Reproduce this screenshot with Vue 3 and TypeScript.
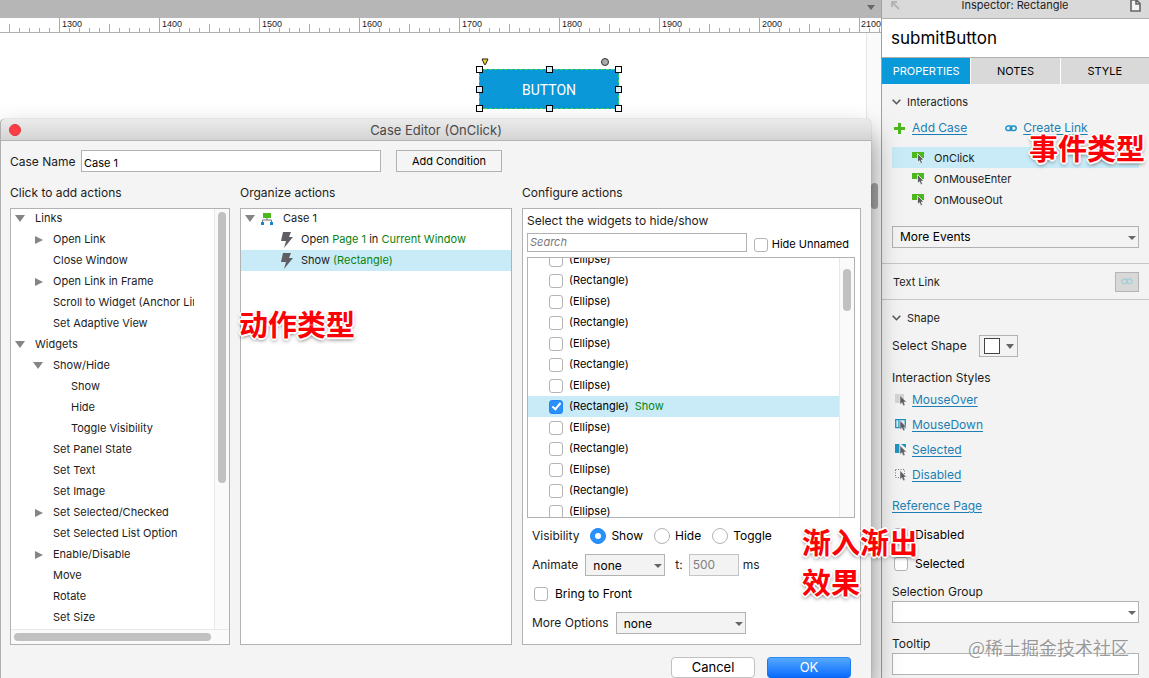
<script setup lang="ts">
import { ref } from 'vue'

interface TreeItem {
  label: string
  level: number
  state?: 'open' | 'closed'
}

interface WidgetItem {
  label: string
  checked: boolean
}

const rulerMarks = [1300, 1400, 1500, 1600, 1700, 1800, 1900, 2000, 2100]

const tree: TreeItem[] = [
  { label: 'Links', level: 0, state: 'open' },
  { label: 'Open Link', level: 1, state: 'closed' },
  { label: 'Close Window', level: 1 },
  { label: 'Open Link in Frame', level: 1, state: 'closed' },
  { label: 'Scroll to Widget (Anchor Link)', level: 1 },
  { label: 'Set Adaptive View', level: 1 },
  { label: 'Widgets', level: 0, state: 'open' },
  { label: 'Show/Hide', level: 1, state: 'open' },
  { label: 'Show', level: 2 },
  { label: 'Hide', level: 2 },
  { label: 'Toggle Visibility', level: 2 },
  { label: 'Set Panel State', level: 1 },
  { label: 'Set Text', level: 1 },
  { label: 'Set Image', level: 1 },
  { label: 'Set Selected/Checked', level: 1, state: 'closed' },
  { label: 'Set Selected List Option', level: 1 },
  { label: 'Enable/Disable', level: 1, state: 'closed' },
  { label: 'Move', level: 1 },
  { label: 'Rotate', level: 1 },
  { label: 'Set Size', level: 1 },
]

const widgets = ref<WidgetItem[]>(
  Array.from({ length: 13 }, (_, i) => ({
    label: i % 2 ? '(Rectangle)' : '(Ellipse)',
    checked: i === 7,
  })),
)

const handles = ['nw', 'n', 'ne', 'w', 'e', 'sw', 's', 'se']
const tabs = ['PROPERTIES', 'NOTES', 'STYLE']
const events = ['OnClick', 'OnMouseEnter', 'OnMouseOut']
const styles = ['MouseOver', 'MouseDown', 'Selected', 'Disabled']

const activeTab = ref('PROPERTIES')
const activeEvent = ref('OnClick')
const caseName = ref('Case 1')
const visibility = ref('Show')
</script>

<template>
  <div class="app">
    <main class="workspace">
      <div class="toolbar"><span class="caret"></span></div>
      <div class="ruler">
        <span v-for="m in rulerMarks" :key="m" class="mark">{{ m }}</span>
      </div>
      <div class="canvas">
        <div class="widget">
          BUTTON
          <i v-for="h in handles" :key="h" class="handle" :class="h"></i>
          <svg class="tri" width="8" height="8" viewBox="0 0 8 8"><path d="M1 1h6L4.500 6.500h-1z" fill="#f0d020" stroke="#222" /></svg>
          <i class="dot"></i>
        </div>
        <div class="canvas-scroll"><i></i></div>
      </div>

      <section class="dialog" role="dialog" aria-labelledby="dlg-title">
        <header class="titlebar">
          <button class="close" type="button" aria-label="Close"></button>
          <h1 id="dlg-title">Case Editor (OnClick)</h1>
        </header>
        <div class="case-row">
          <label for="case-name">Case Name</label>
          <input id="case-name" v-model="caseName" type="text" class="field" />
          <button type="button" class="flat">Add Condition</button>
        </div>
        <div class="columns">
          <div class="column">
            <h2>Click to add actions</h2>
            <div class="panel actions">
              <ul class="tree">
                <li v-for="t in tree" :key="t.label" :class="'level' + t.level">
                  <span class="arrow" :class="t.state"></span><span class="name">{{ t.label }}</span>
                </li>
              </ul>
              <div class="vbar"><i></i></div>
              <div class="hbar"><i></i></div>
            </div>
          </div>

          <div class="column">
            <h2>Organize actions</h2>
            <div class="panel">
              <ul class="cases">
                <li class="case">
                  <span class="arrow open"></span>
                  <svg class="flow" width="12" height="12" viewBox="0 0 12 12">
                    <path d="M6 4v3M1.500 9V7h9v2" fill="none" stroke="#777" />
                    <rect x="2" y="0" width="8" height="5" fill="#4cb81b" />
                    <path d="M0 9h3v3H0zM9 9h3v3H9z" fill="#1687c4" />
                  </svg>
                  <span>Case 1</span>
                </li>
                <li class="action">
                  <svg class="bolt" width="12" height="16" viewBox="0 0 12 16"><path d="M2 0h8L8 5h4L3 16l2-7H0z" fill="#5e5e64" /></svg>
                  <span>Open <b>Page 1</b> in <b>Current Window</b></span>
                </li>
                <li class="action selected">
                  <svg class="bolt" width="12" height="16" viewBox="0 0 12 16"><path d="M2 0h8L8 5h4L3 16l2-7H0z" fill="#5e5e64" /></svg>
                  <span>Show <b>(Rectangle)</b></span>
                </li>
              </ul>
            </div>
          </div>

          <div class="column">
            <h2>Configure actions</h2>
            <div class="panel config">
              <h3>Select the widgets to hide/show</h3>
              <div class="search-row">
                <input type="search" class="field search" placeholder="Search" aria-label="Search" />
                <label class="check small"><input type="checkbox" />Hide Unnamed</label>
              </div>
              <div class="list">
                <div class="rows">
                  <label v-for="(w, i) in widgets" :key="i" class="check small row" :class="{ selected: w.checked }">
                    <input v-model="w.checked" type="checkbox" />{{ w.label }}<b v-if="w.checked">Show</b>
                  </label>
                </div>
                <div class="vbar"><i></i></div>
              </div>
              <div class="options">
                <div class="opt visibility">
                  <span class="caption">Visibility</span>
                  <label v-for="v in ['Show', 'Hide', 'Toggle']" :key="v" class="check">
                    <input v-model="visibility" type="radio" name="visibility" :value="v" />{{ v }}
                  </label>
                </div>
                <div class="opt">
                  <label for="animate">Animate</label>
                  <span class="select short"><select id="animate"><option>none</option></select></span>
                  <label for="time">t:</label>
                  <input id="time" class="time" type="text" value="500" disabled />
                  <span class="unit">ms</span>
                </div>
                <div class="opt front">
                  <label class="check"><input type="checkbox" />Bring to Front</label>
                </div>
                <div class="opt">
                  <label for="more-options">More Options</label>
                  <span class="select medium"><select id="more-options"><option>none</option></select></span>
                </div>
              </div>
            </div>
          </div>
        </div>
        <footer class="buttons">
          <button type="button" class="cancel">Cancel</button>
          <button type="button" class="ok">OK</button>
        </footer>
      </section>
    </main>

    <aside class="inspector">
      <header class="insp-head">
        <svg width="9" height="9" viewBox="0 0 9 9"><path d="M8 8L2 2M1 6V1h5" fill="none" stroke="#b4b4b4" stroke-width="2" /></svg>
        <span>Inspector: Rectangle</span>
        <svg width="11" height="13" viewBox="0 0 11 13"><path d="M1 1h5.500L10 4.500V12H1zM6 1v4h4" fill="#f4f4f4" stroke="#666" stroke-width="1.600" /></svg>
      </header>
      <div class="widget-name">submitButton</div>
      <nav class="tabs">
        <button v-for="t in tabs" :key="t" type="button" :class="{ active: t === activeTab }" @click="activeTab = t">{{ t }}</button>
      </nav>

      <div class="group">
        <h2 class="fold">
          <svg width="9" height="6" viewBox="0 0 9 6"><path d="M.700 .700l3.800 4 3.800-4" fill="none" stroke="#555" stroke-width="1.600" /></svg>Interactions
        </h2>
        <div class="links">
          <svg width="11" height="11" viewBox="0 0 11 11"><path d="M4 0h3v4h4v3H7v4H4V7H0V4h4z" fill="#4cb81b" /></svg>
          <a href="#">Add Case</a>
          <svg class="chain" width="12" height="7" viewBox="0 0 12 7">
            <g fill="none" stroke="#1f93c9" stroke-width="1.500"><rect x=".8" y="1" width="6" height="4.600" rx="2.300" /><rect x="5.200" y="1" width="6" height="4.600" rx="2.300" /></g>
          </svg>
          <a href="#">Create Link</a>
        </div>
        <ul class="events">
          <li v-for="e in events" :key="e" :class="{ selected: e === activeEvent }" @click="activeEvent = e">
            <svg width="13" height="14" viewBox="0 0 13 14">
              <rect width="12" height="6" y="1" fill="#4cb81b" />
              <path d="M5.500 2.500v9l2-1.800 1.200 3 1.900-.8-1.200-2.900h2.600z" fill="#5e5e64" stroke="#f0faf0" stroke-width=".8" />
            </svg>{{ e }}
          </li>
        </ul>
        <span class="select wide"><select aria-label="More Events"><option>More Events</option></select></span>
      </div>

      <div class="text-link">
        <span>Text Link</span>
        <button type="button" aria-label="Text Link">
          <svg width="12" height="7" viewBox="0 0 12 7">
            <g fill="none" stroke="#a9cfd6" stroke-width="1.400"><rect x=".8" y="1" width="6" height="4.600" rx="2.300" /><rect x="5.200" y="1" width="6" height="4.600" rx="2.300" /></g>
          </svg>
        </button>
      </div>

      <div class="group">
        <h2 class="fold">
          <svg width="9" height="6" viewBox="0 0 9 6"><path d="M.700 .700l3.800 4 3.800-4" fill="none" stroke="#555" stroke-width="1.600" /></svg>Shape
        </h2>
        <div class="shape-row">
          <span>Select Shape</span>
          <button type="button" class="shape" aria-label="Select Shape"><i></i><span class="caret"></span></button>
        </div>
        <h3>Interaction Styles</h3>
        <ul class="styles">
          <li v-for="s in styles" :key="s">
            <svg width="12" height="12" viewBox="0 0 12 12">
              <rect v-if="s === 'MouseOver'" x="0" y="0" width="9" height="9" fill="#d4d4d4" />
              <path v-else-if="s === 'MouseDown'" d="M.700 .700h9.600v8H.700zM4 1v7" fill="#d9eef6" stroke="#1f8fc0" stroke-width="1.300" />
              <path v-else-if="s === 'Selected'" d="M0 0h4.500v9H0zM6 0h5v4z" fill="#1f93c0" />
              <path v-else d="M.500 .500h9v8h-9z" fill="none" stroke="#777" stroke-dasharray="1 1.500" />
              <path d="M5 1.500v9l2-1.800 1.200 3 1.900-.8-1.200-2.900h2.600z" fill="#5e5e64" stroke="#f3f3f3" stroke-width=".5" />
            </svg>
            <a href="#">{{ s }}</a>
          </li>
        </ul>
        <a class="ref-page" href="#">Reference Page</a>
        <div class="flags">
          <label class="check"><input type="checkbox" />Disabled</label>
          <label class="check"><input type="checkbox" />Selected</label>
        </div>
        <label class="caption" for="sel-group">Selection Group</label>
        <span class="select wide white"><select id="sel-group"><option></option></select></span>
        <label class="caption tip" for="tooltip">Tooltip</label>
        <input id="tooltip" type="text" class="field" />
      </div>
    </aside>

    <p class="note event-note">事件类型</p>
    <p class="note action-note">动作类型</p>
    <p class="note fade-note">渐入渐出<br />效果</p>
    <p class="watermark">@稀土掘金技术社区</p>
  </div>
</template>

<style>
body {
  margin: 0;
  overflow: hidden;
}
</style>

<style scoped>
.app {
  position: relative;
  display: grid;
  grid-template-columns: 1fr 268px;
  height: 100vh;
  min-height: 678px;
  overflow: hidden;
  background: #fff;
  color: #1c1c1c;
  font: 12px/20px Inter, 'Noto Sans CJK SC', sans-serif;
}
.app *,
.app *::before,
.app *::after {
  box-sizing: border-box;
}
h1, h2, h3, p, ul {
  margin: 0;
  padding: 0;
  font-size: inherit;
  font-weight: 400;
  list-style: none;
}
b {
  font-weight: 400;
  color: #08830f;
}
button, input, select {
  margin: 0;
  padding: 0;
  font: inherit;
  color: #000;
}
svg {
  display: block;
  flex: none;
}
a {
  color: #1b7fb4;
  text-decoration: underline;
  text-underline-offset: 2px;
}
.caret {
  width: 0;
  height: 0;
  border: 4px solid transparent;
  border-top: 5px solid #666;
  border-bottom: 0;
}

/* canvas */
.workspace {
  position: relative;
  z-index: 1;
  display: flex;
  flex-direction: column;
  min-width: 0;
}
.toolbar {
  display: flex;
  align-items: center;
  justify-content: flex-end;
  height: 18px;
  padding: 0 6px 4px 0;
  background: #b6b6b6;
}
.ruler {
  display: flex;
  height: 15px;
  padding-left: 59px;
  overflow: hidden;
  border-bottom: 1px solid #b0b0b0;
  background:
    linear-gradient(90deg, #aaa 1px, transparent 1px) 9px 100% / 10px 4px repeat-x,
    linear-gradient(90deg, #aaa 1px, transparent 1px) 9px 100% / 50px 8px repeat-x,
    #fff;
}
.mark {
  flex: 0 0 100px;
  padding-left: 2px;
  border-left: 1px solid #aaa;
  font: 9px/12px 'Liberation Sans', sans-serif;
}
.mark:last-child {
  flex: 0 1 100px;
  min-width: 0;
  padding-left: 1px;
}
.canvas {
  position: relative;
  display: flex;
  flex: 1;
  justify-content: flex-end;
}
.canvas-scroll {
  width: 15px;
  padding: 150px 3px 0 4px;
  border-left: 1px solid #e6e6e6;
  background: #fafafa;
}
.canvas-scroll i {
  display: block;
  height: 26px;
  border-radius: 4px;
  background: #aaa;
}
.widget {
  position: absolute;
  top: 36px;
  left: 479px;
  width: 140px;
  height: 40px;
  border: 1px dashed #3fd45c;
  background: #0a98d8;
  color: #fff;
  font: 14px/40px Roboto, sans-serif;
  text-align: center;
}
.handle {
  position: absolute;
  width: 7px;
  height: 7px;
  border: 1px solid #000;
  background: #fff;
}
.nw, .n, .ne { top: -4px; }
.w, .e { top: 16px; }
.sw, .s, .se { bottom: -4px; }
.nw, .w, .sw { left: -4px; }
.n, .s { left: 66px; }
.ne, .e, .se { right: -4px; }
.n, .w, .e, .s { background: #d5eefa; }
.tri {
  position: absolute;
  top: -12px;
  left: 1px;
}
.dot {
  position: absolute;
  top: -12px;
  right: 9px;
  width: 8px;
  height: 8px;
  border: 1px solid #333;
  border-radius: 50%;
  background: #aaa;
}

/* dialog */
.dialog {
  position: absolute;
  top: 119px;
  right: 10px;
  bottom: 0;
  left: 0;
  display: flex;
  flex-direction: column;
  border-left: 1px solid #b0b0b0;
  border-radius: 5px 5px 0 0;
  background: #f4f4f4;
  box-shadow: 0 0 1px rgba(0, 0, 0, .5), 0 16px 28px rgba(0, 0, 0, .5);
}
.titlebar {
  display: flex;
  align-items: center;
  height: 22px;
  padding-left: 8px;
  border-bottom: 1px solid #b4b4b4;
  border-radius: 5px 5px 0 0;
  background: linear-gradient(#ebebeb, #d4d4d4);
}
.titlebar h1 {
  flex: 1;
  padding: 1px 20px 0 0;
  color: #4a4a4a;
  font-size: 13px;
  text-align: center;
}
.close {
  width: 12px;
  height: 12px;
  border: 1px solid #e33239;
  border-radius: 50%;
  background: #fc3d47;
}
.field {
  display: block;
  width: 100%;
  height: 22px;
  padding: 0 2px;
  border: 1px solid #b2b2b2;
  border-radius: 0;
  outline: 0;
  background: #fff;
  font-size: 11px;
}
.case-row {
  display: flex;
  align-items: center;
  padding: 9px 9px 0;
}
.case-row label {
  flex: 0 0 71px;
  padding-top: 2px;
}
.case-row .field {
  width: 300px;
  padding-top: 3px;
}
.flat {
  width: 106px;
  height: 22px;
  margin-left: 15px;
  border: 1px solid #b2b2b2;
  background: #f5f5f5;
  font-size: 11px;
}
.columns {
  display: grid;
  flex: 1;
  grid-template-columns: 220fr 272fr 339fr;
  gap: 10px;
  min-height: 0;
  padding: 11px 10px 0 9px;
}
.column {
  display: flex;
  flex-direction: column;
  min-width: 0;
}
.panel {
  flex: 1;
  min-height: 0;
  margin-top: 5px;
  border: 1px solid #b2b2b2;
  background: #fff;
  font-size: 11px;
  line-height: 21px;
}
.actions {
  display: grid;
  grid-template-rows: 1fr 15px;
  grid-template-columns: 1fr 15px;
}
.tree {
  padding-right: 20px;
  overflow: hidden;
}
.tree li {
  display: flex;
  align-items: center;
  height: 21px;
  padding-left: 4px;
  overflow: hidden;
  white-space: nowrap;
}
.tree,
.cases {
  margin-top: -1px;
}
.tree .level1 { padding-left: 22px; }
.tree .level2 { padding-left: 40px; }
.arrow {
  display: flex;
  flex: 0 0 20px;
}
.arrow.open::before {
  border: 5px solid transparent;
  border-top: 7px solid #858585;
  border-bottom: 0;
  content: '';
}
.arrow.closed::before {
  margin-left: 2px;
  border: 4px solid transparent;
  border-left: 8px solid #858585;
  border-right: 0;
  content: '';
}
.vbar {
  padding: 3px 3px 0;
  border-left: 1px solid #e8e8e8;
  background: #fafafa;
}
.vbar i {
  display: block;
  width: 8px;
  height: 271px;
  border-radius: 4px;
  background: #c1c1c1;
}
.hbar {
  grid-column: 1 / 3;
  padding: 3px 18px 0 3px;
  border-top: 1px solid #e8e8e8;
  background: #fafafa;
}
.hbar i {
  display: block;
  height: 8px;
  border-radius: 4px;
  background: #c1c1c1;
}
.cases li {
  display: flex;
  align-items: center;
  height: 21px;
}
.cases .case { padding-left: 4px; }
.cases .case .arrow { flex-basis: 16px; }
.cases .action { padding-left: 40px; }
.cases .flow { margin-right: 10px; }
.cases .bolt { margin-right: 8px; }
.selected { background: #c8ebf7; }

.config {
  padding: 2px 5px 0 4px;
}
.config h3 {
  font-size: 12px;
  line-height: 20px;
}
.search-row {
  display: flex;
  align-items: flex-start;
  padding-top: 2px;
  line-height: 19px;
}
.search {
  flex: 1;
  height: 19px;
  margin-right: 7px;
  appearance: none;
}
.search::placeholder {
  color: #777;
  font-style: italic;
}
.search-row .check {
  padding: 2px 6px 0 0;
}
.search-row .check input { margin-right: 4px; }
.list {
  display: flex;
  height: 261px;
  margin-top: 3px;
  overflow: hidden;
  border: 1px solid #b2b2b2;
}
.rows {
  flex: 1;
  margin-top: -9px;
}
.list .vbar {
  width: 15px;
  padding-top: 11px;
}
.list .vbar i { height: 42px; }
.check {
  display: flex;
  align-items: center;
  color: #000;
}
.check.small { font-size: 11px; }
.check.row {
  height: 21px;
  padding-left: 21px;
}
.check.row b { margin-left: 6px; }
.check input {
  display: grid;
  flex: none;
  place-items: center;
  width: 14px;
  height: 14px;
  margin-right: 7px;
  border: 1px solid #b4b4b4;
  border-radius: 3px;
  background: #fff;
  appearance: none;
}
.check.row input {
  margin-right: 6px;
}
.check input:checked {
  border-color: #1f86f5;
  background: #2a90fb;
}
.check input[type='checkbox']:checked::after {
  width: 5px;
  height: 9px;
  margin-bottom: 2px;
  border: solid #fff;
  border-width: 0 2px 2px 0;
  transform: rotate(40deg);
  content: '';
}
.check input[type='radio'] {
  width: 16px;
  height: 16px;
  margin-right: 5px;
  border-radius: 50%;
}
.check input[type='radio']:checked::after {
  width: 6px;
  height: 6px;
  border-radius: 50%;
  background: #fff;
  content: '';
}
.options {
  padding: 3px 0 0 5px;
  font-size: 12px;
}
.opt {
  display: flex;
  align-items: center;
  height: 29px;
}
.visibility { gap: 11px; }
.front { padding-left: 2px; }
.select {
  position: relative;
  display: block;
  height: 22px;
}
.select::after {
  position: absolute;
  top: 10px;
  right: 3px;
  border: 4px solid transparent;
  border-top: 4px solid #666;
  border-bottom: 0;
  content: '';
  pointer-events: none;
}
.select select {
  display: block;
  width: 100%;
  height: 22px;
  padding: 0 14px 0 7px;
  border: 1px solid #b2b2b2;
  border-radius: 0;
  background: #f3f3f3;
  appearance: none;
}
.white select { background: #fff; }
.short {
  width: 80px;
  margin: 0 10px 0 7px;
}
.medium {
  width: 130px;
  margin-left: 7px;
}
.time {
  width: 50px;
  height: 22px;
  margin: 0 4px 0 6px;
  padding: 0 3px;
  border: 1px solid #c4c4c4;
  background: #f3f3f3;
  color: #808080;
}
.buttons {
  display: flex;
  gap: 12px;
  justify-content: flex-end;
  padding: 12px 20px 0 0;
}
.buttons button {
  width: 84px;
  height: 21px;
  border: 1px solid #c0c0c0;
  border-radius: 4px;
  background: #fff;
  font-size: 13px;
  line-height: 19px;
}
.buttons .ok {
  border-color: #2c8bf5 #1a79f0 #0f63e6;
  background: linear-gradient(#55a9fb, #0a6cff);
  color: #fff;
}

/* inspector */
.inspector {
  display: flex;
  flex-direction: column;
  border-left: 1px solid #a0a0a0;
  background: #f3f3f3;
}
.insp-head {
  display: flex;
  align-items: center;
  justify-content: space-between;
  height: 19px;
  padding: 0 8px 8px 9px;
  border-bottom: 1px solid #b0b0b0;
  background: #d9d9d9;
  font-size: 11px;
}
.widget-name {
  height: 39px;
  padding-left: 9px;
  border-bottom: 1px solid #b0b0b0;
  background: #fff;
  color: #000;
  font-size: 17px;
  line-height: 38px;
}
.tabs {
  display: flex;
  gap: 1px;
  height: 26px;
  background: #fff;
}
.tabs button {
  flex: 1;
  border: 0;
  background: #d9d9d9;
  font-size: 11px;
}
.tabs .active {
  background: #0a9ad9;
  color: #fff;
}
.group {
  padding: 8px 10px 0;
}
.fold {
  display: flex;
  gap: 6px;
  align-items: center;
  font-size: 11px;
}
.links {
  display: flex;
  align-items: center;
  height: 24px;
  padding-left: 2px;
  margin-top: 4px;
}
.links a { margin-left: 7px; }
.links .chain { margin-left: 38px; }
.links .chain + a { margin-left: 6px; }
.events {
  margin: 7px 0 16px;
  font-size: 11px;
}
.events li {
  display: flex;
  gap: 9px;
  align-items: center;
  height: 21px;
  padding-left: 20px;
}
.text-link {
  display: flex;
  align-items: center;
  justify-content: space-between;
  height: 37px;
  padding: 0 10px 0 11px;
  margin-top: 15px;
  border: solid #c6c6c6;
  border-width: 1px 0;
  font-size: 11px;
}
.text-link button {
  display: grid;
  place-items: center;
  width: 24px;
  height: 20px;
  border: 1px solid #b4b4b4;
  background: #d8d8d8;
}
.shape-row {
  display: flex;
  gap: 12px;
  align-items: center;
  margin: 7px 0 12px;
}
.group h3 {
  line-height: 18px;
}
.shape {
  display: flex;
  align-items: center;
  justify-content: space-between;
  width: 39px;
  height: 22px;
  padding: 0 3px 0 4px;
  border: 1px solid #b2b2b2;
  background: #f3f3f3;
}
.shape i {
  width: 16px;
  height: 16px;
  border: 1px solid #444;
  background: #fff;
}
.styles li {
  display: flex;
  gap: 5px;
  align-items: center;
  height: 25px;
  padding-left: 3px;
}
.ref-page {
  display: block;
  margin: 9px 0 4px;
}
.flags .check {
  height: 29px;
  padding-left: 2px;
}
.caption {
  line-height: 18px;
}
.group .caption {
  display: block;
  margin-top: 5px;
}
.group .tip {
  margin-top: 12px;
}

/* overlaid notes */
.note {
  position: absolute;
  z-index: 2;
  color: #fb0207;
  font: 700 29px/40px 'Noto Sans CJK SC', sans-serif;
  text-shadow:
    2px 0 #fff, -2px 0 #fff, 0 2px #fff, 0 -2px #fff,
    1px 1px #fff, -1px 1px #fff, 1px -1px #fff, -1px -1px #fff,
    0 2px 4px rgba(0, 0, 0, .7);
  white-space: nowrap;
}
.event-note {
  top: 127px;
  right: 4px;
}
.action-note {
  top: 303px;
  left: 239px;
}
.fade-note {
  top: 521px;
  left: 802px;
}
.watermark {
  position: absolute;
  top: 635px;
  right: 20px;
  z-index: 2;
  color: rgba(110, 110, 110, .7);
  font: 18px/24px 'Noto Sans CJK SC', sans-serif;
  text-shadow: 1px 1px 1px #fff;
}
</style>
